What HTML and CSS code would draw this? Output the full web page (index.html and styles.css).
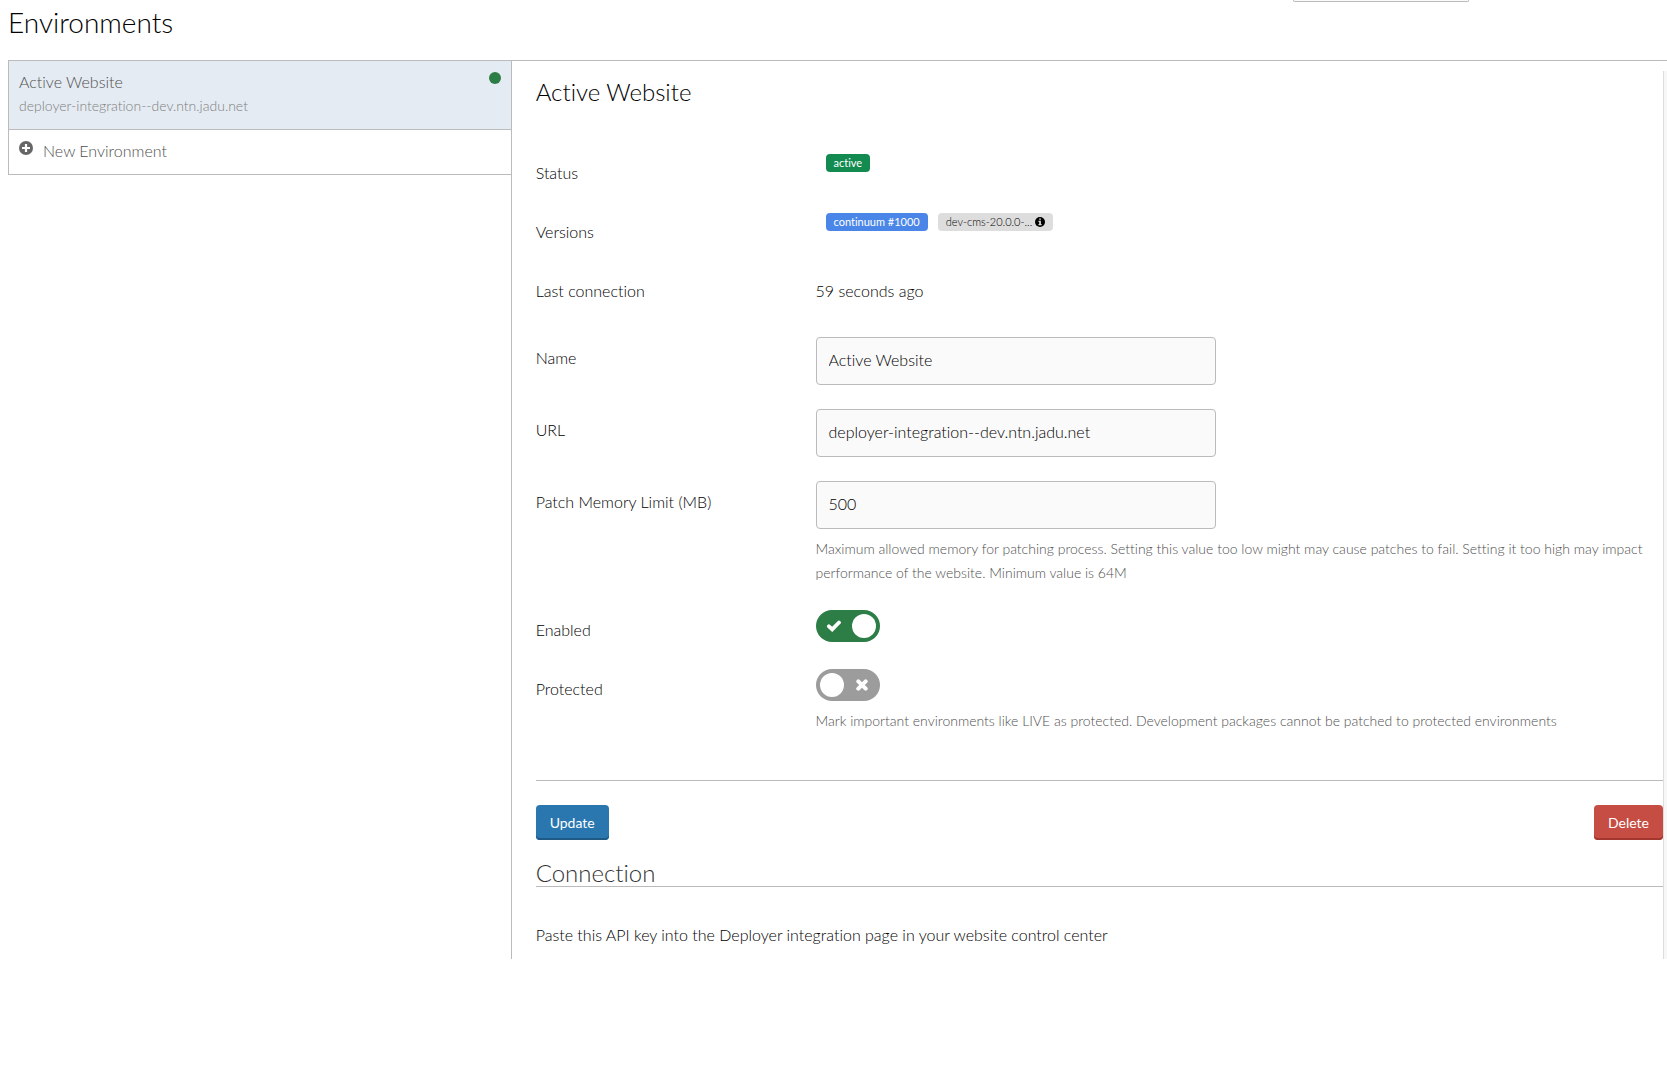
FILE: index.html
```html
<!DOCTYPE html>
<html lang="en">
<head>
<meta charset="utf-8">
<title>Environments</title>
<link rel="stylesheet" href="styles.css">
</head>
<body>
<div class="search-edge"></div>
<h1 class="page-title">Environments</h1>
<div class="layout">
  <nav class="env-list" aria-label="Environments">
    <a class="env env-active" href="#">
      <span class="env-text">
        <span class="env-name">Active Website</span>
        <span class="env-host">deployer-integration--dev.ntn.jadu.net</span>
      </span>
      <span class="env-dot"></span>
    </a>
    <a class="env env-new" href="#">
      <svg class="icon-plus" viewBox="0 0 14 14" aria-hidden="true"><circle cx="7" cy="7" r="7" fill="#666"/><path d="M7 3v8M3 7h8" stroke="#fff" stroke-width="2.200"/></svg>
      <span class="env-name">New Environment</span>
    </a>
  </nav>
  <main class="detail">
    <div class="detail-body">
      <h2 class="detail-title">Active Website</h2>
      <form class="form">
        <div class="row row-static">
          <span class="label">Status</span>
          <div class="badges"><span class="badge badge-green">active</span></div>
        </div>
        <div class="row row-static">
          <span class="label">Versions</span>
          <div class="badges">
            <span class="badge badge-blue">continuum #1000</span>
            <span class="badge badge-grey">dev-cms-20.0.0-...
              <svg class="icon-info" viewBox="0 0 10 10" aria-hidden="true"><circle cx="5" cy="5" r="5" fill="#000"/><path d="M4.2 1.4h1.7v1.3H4.2zM3.5 3.7h2.4v3.4h.7v1.2H3.5V7.100h.7V4.900h-.7z" fill="#ddd"/></svg>
            </span>
          </div>
        </div>
        <div class="row row-static">
          <span class="label">Last connection</span>
          <span class="value">59 seconds ago</span>
        </div>
        <div class="row row-input">
          <label class="label" for="name">Name</label>
          <div><input class="input" id="name" type="text" value="Active Website"></div>
        </div>
        <div class="row row-input">
          <label class="label" for="url">URL</label>
          <div><input class="input" id="url" type="text" value="deployer-integration--dev.ntn.jadu.net"></div>
        </div>
        <div class="row row-input">
          <label class="label" for="memory">Patch Memory Limit (MB)</label>
          <div>
            <input class="input" id="memory" type="text" value="500">
            <p class="help help-input">Maximum allowed memory for patching process. Setting this value too low might may cause patches to fail. Setting it too high may impact performance of the website. Minimum value is 64M</p>
          </div>
        </div>
        <div class="row row-toggle">
          <label class="label" for="enabled">Enabled</label>
          <div class="switch">
            <input class="toggle" id="enabled" type="checkbox" checked>
            <svg class="mark mark-on" viewBox="0 0 16 12" aria-hidden="true"><path d="M2.900 6.300 6.200 9.400 13 2.500" fill="none" stroke="#fff" stroke-width="3.800" stroke-linecap="round"/></svg>
          </div>
        </div>
        <div class="row row-toggle">
          <label class="label" for="protected">Protected</label>
          <div>
            <div class="switch">
              <input class="toggle" id="protected" type="checkbox">
              <svg class="mark mark-off" viewBox="0 0 12 12" aria-hidden="true"><path d="M2.300 2.300 9.700 9.700M9.700 2.300 2.300 9.700" stroke="#fff" stroke-width="4" stroke-linecap="round"/></svg>
            </div>
            <p class="help help-toggle">Mark important environments like LIVE as protected. Development packages cannot be patched to protected environments</p>
          </div>
        </div>
        <div class="actions">
          <button class="button button-primary" type="submit">Update</button>
          <button class="button button-danger" type="button">Delete</button>
        </div>
      </form>
      <h2 class="section-title">Connection</h2>
      <p class="note">Paste this API key into the Deployer integration page in your website control center</p>
    </div>
    <div class="gutter"></div>
  </main>
</div>
</body>
</html>
```
FILE: styles.css
```css
* {
  box-sizing: border-box;
}

body {
  margin: 0;
  background: #fff;
  color: #000;
  font: 300 16px/24px Lato, "Liberation Sans", sans-serif;
  font-variant-ligatures: none;
}

h1,
h2,
p {
  margin: 0;
  font-weight: 300;
}

.search-edge {
  width: 176px;
  height: 2px;
  margin: 0 198px 0 auto;
  border: 1px solid #bbb;
  border-top: 0;
  border-radius: 0 0 3px 3px;
  background: #fafafa;
}

.page-title {
  padding: 4px 8px 22px;
  font-size: 28px;
  line-height: 32px;
}

.layout {
  display: flex;
  align-items: flex-start;
  margin-left: 8px;
  border-top: 1px solid #bbb;
}

.env-list {
  flex: none;
  width: calc(30% + 5px);
  border-left: 1px solid #bbb;
}

.env {
  display: flex;
  padding: 9px 10px;
  border-bottom: 1px solid #bbb;
  color: #505050;
  text-decoration: none;
}

.env-active {
  min-height: 69px;
  justify-content: space-between;
  background: #e4ebf2;
}

.env-text {
  display: flex;
  flex-direction: column;
}

.env-host {
  color: #808080;
  font-size: 14px;
}

.env-dot {
  width: 12px;
  height: 12px;
  margin-top: 2px;
  border-radius: 50%;
  background: #2d7d46;
}

.env-new {
  gap: 10px;
  min-height: 45px;
}

.icon-plus {
  width: 14px;
  height: 14px;
  margin-top: 2px;
}

.detail {
  display: flex;
  flex: 1;
  min-width: 0;
  border-left: 1px solid #bbb;
}

.detail-body {
  flex: 1;
  min-width: 0;
  padding: 15px 0 12px 24px;
}

.gutter {
  flex: none;
  width: 4px;
  margin-top: 10px;
  border-left: 1px solid #ddd;
  background: #f7f7f7;
}

.detail-title {
  padding-bottom: 46px;
  font-size: 24px;
  line-height: 32px;
}

.row {
  display: grid;
  grid-template-columns: calc(25% - 2px) 1fr;
}

.row-static {
  height: 59px;
}

.row-static .label,
.row-static .value {
  padding-top: 7px;
}

.badges {
  display: flex;
  gap: 10px;
  padding-left: 10px;
}

.badge {
  display: flex;
  align-items: center;
  gap: 3px;
  height: 18px;
  padding: 0 8px;
  border-radius: 4px;
  font-size: 11px;
  line-height: 18px;
}

.badge-green {
  background: #128a50;
  color: #fff;
  font-weight: 400;
}

.badge-blue {
  background: #4a86e8;
  color: #fff;
  font-weight: 400;
}

.badge-grey {
  background: #ddd;
}

.icon-info {
  width: 10px;
  height: 10px;
}

.row-input {
  padding: 6px 0 18px;
}

.row-input .label {
  padding-top: 9px;
}

.input {
  display: block;
  width: 400px;
  max-width: 100%;
  height: 48px;
  padding: 0 12px 4px;
  border: 1px solid #bbb;
  border-radius: 4px;
  background: #fafafa;
  color: #000;
  font: inherit;
}

.help {
  padding-top: 8px;
  color: #505050;
  font-size: 14px;
}

.help-input {
  padding-bottom: 7px;
}

.row-toggle {
  padding-bottom: 27px;
}

.row-toggle .label {
  padding-top: 8px;
}

.help-toggle {
  padding-bottom: 20px;
}

.switch {
  display: grid;
  width: 64px;
  height: 32px;
  align-items: center;
}

.toggle,
.mark {
  grid-area: 1 / 1;
}

.toggle {
  display: flex;
  appearance: none;
  width: 64px;
  height: 32px;
  margin: 0;
  padding: 4px;
  border-radius: 16px;
  background: #9c9c9c;
}

.toggle::before {
  content: "";
  width: 24px;
  height: 24px;
  border-radius: 50%;
  background: #fff;
}

.toggle:checked {
  justify-content: flex-end;
  background: #2d7d46;
}

.mark {
  pointer-events: none;
}

.mark-on {
  width: 16px;
  height: 12px;
  margin-left: 10px;
}

.mark-off {
  width: 12px;
  height: 12px;
  margin-left: 40px;
}

.actions {
  display: flex;
  justify-content: space-between;
  padding: 24px 0 20px;
  border-top: 1px solid #bbb;
}

.button {
  height: 35px;
  padding: 0 14px;
  border: 0;
  border-radius: 4px;
  color: #fff;
  font: 400 14px/32px Lato, "Liberation Sans", sans-serif;
}

.button-primary {
  background: #2a77b0;
  box-shadow: inset 0 -2px #1f5a87;
}

.button-danger {
  background: #c64d43;
  box-shadow: inset 0 -2px #a3372f;
}

.section-title {
  border-bottom: 1px solid #bbb;
  color: #333;
  font-size: 24px;
  line-height: 26px;
}

.note {
  padding-top: 36px;
}
```
